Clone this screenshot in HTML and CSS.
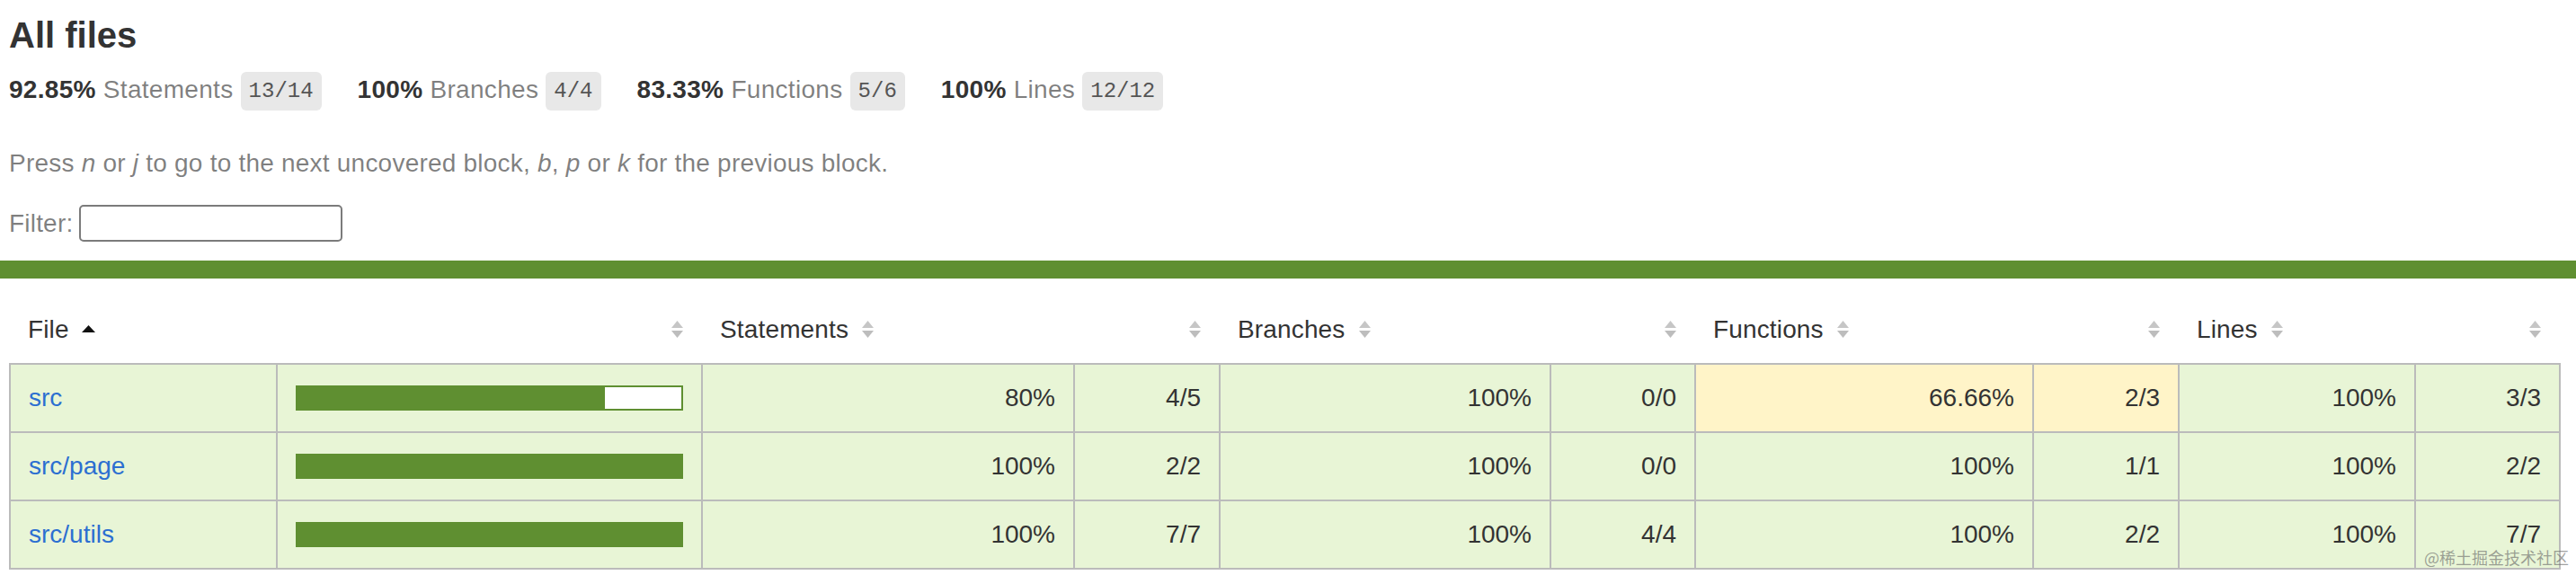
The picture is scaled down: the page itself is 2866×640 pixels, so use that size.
FILE: index.html
```html
<!doctype html>
<html lang="en">
<head>
<meta charset="utf-8">
<title>Code coverage report for All files</title>
<link rel="stylesheet" href="styles.css">
</head>
<body>
<div class="wrapper">
  <div class="header">
    <h1>All files</h1>
    <div class="summary">
      <div class="summary-item"><span class="strong">92.85% </span> <span class="quiet">Statements</span> <span class="fraction">13/14</span></div>
      <div class="summary-item"><span class="strong">100% </span> <span class="quiet">Branches</span> <span class="fraction">4/4</span></div>
      <div class="summary-item"><span class="strong">83.33% </span> <span class="quiet">Functions</span> <span class="fraction">5/6</span></div>
      <div class="summary-item"><span class="strong">100% </span> <span class="quiet">Lines</span> <span class="fraction">12/12</span></div>
    </div>
    <p class="quiet hint">Press <em>n</em> or <em>j</em> to go to the next uncovered block, <em>b</em>, <em>p</em> or <em>k</em> for the previous block.</p>
    <div class="quiet filter"><span>Filter:</span><input type="search" class="file-search"></div>
  </div>
  <div class="status-line"></div>
  <div class="table-wrap">
    <table class="coverage-summary">
      <colgroup>
        <col class="c-file"><col class="c-pic"><col class="c-spct"><col class="c-sabs"><col class="c-bpct"><col class="c-babs"><col class="c-fpct"><col class="c-fabs"><col class="c-lpct"><col class="c-labs">
      </colgroup>
      <thead>
        <tr>
          <th class="file sorted">File<span class="sorter"><svg viewBox="0 0 15 20" width="15" height="20"><polygon points="0,14 7.5,6 15,14" fill="#111"/></svg></span></th>
          <th class="pic"><span class="sorter"><svg viewBox="0 0 15 20" width="15" height="20"><polygon points="1,9 7.5,1 14,9" fill="#c6c6c6"/><polygon points="1,12 7.5,20 14,12" fill="#bdbdbd"/></svg></span></th>
          <th class="pct">Statements<span class="sorter"><svg viewBox="0 0 15 20" width="15" height="20"><polygon points="1,9 7.5,1 14,9" fill="#c6c6c6"/><polygon points="1,12 7.5,20 14,12" fill="#bdbdbd"/></svg></span></th>
          <th class="abs"><span class="sorter"><svg viewBox="0 0 15 20" width="15" height="20"><polygon points="1,9 7.5,1 14,9" fill="#c6c6c6"/><polygon points="1,12 7.5,20 14,12" fill="#bdbdbd"/></svg></span></th>
          <th class="pct">Branches<span class="sorter"><svg viewBox="0 0 15 20" width="15" height="20"><polygon points="1,9 7.5,1 14,9" fill="#c6c6c6"/><polygon points="1,12 7.5,20 14,12" fill="#bdbdbd"/></svg></span></th>
          <th class="abs"><span class="sorter"><svg viewBox="0 0 15 20" width="15" height="20"><polygon points="1,9 7.5,1 14,9" fill="#c6c6c6"/><polygon points="1,12 7.5,20 14,12" fill="#bdbdbd"/></svg></span></th>
          <th class="pct">Functions<span class="sorter"><svg viewBox="0 0 15 20" width="15" height="20"><polygon points="1,9 7.5,1 14,9" fill="#c6c6c6"/><polygon points="1,12 7.5,20 14,12" fill="#bdbdbd"/></svg></span></th>
          <th class="abs"><span class="sorter"><svg viewBox="0 0 15 20" width="15" height="20"><polygon points="1,9 7.5,1 14,9" fill="#c6c6c6"/><polygon points="1,12 7.5,20 14,12" fill="#bdbdbd"/></svg></span></th>
          <th class="pct">Lines<span class="sorter"><svg viewBox="0 0 15 20" width="15" height="20"><polygon points="1,9 7.5,1 14,9" fill="#c6c6c6"/><polygon points="1,12 7.5,20 14,12" fill="#bdbdbd"/></svg></span></th>
          <th class="abs"><span class="sorter"><svg viewBox="0 0 15 20" width="15" height="20"><polygon points="1,9 7.5,1 14,9" fill="#c6c6c6"/><polygon points="1,12 7.5,20 14,12" fill="#bdbdbd"/></svg></span></th>
        </tr>
      </thead>
      <tbody>
        <tr>
          <td class="file high"><a href="#">src</a></td>
          <td class="pic high"><div class="chart"><div class="cover-fill" style="width: 80%"></div><div class="cover-empty" style="width: 20%"></div></div></td>
          <td class="pct high">80%</td>
          <td class="abs high">4/5</td>
          <td class="pct high">100%</td>
          <td class="abs high">0/0</td>
          <td class="pct medium">66.66%</td>
          <td class="abs medium">2/3</td>
          <td class="pct high">100%</td>
          <td class="abs high">3/3</td>
        </tr>
        <tr>
          <td class="file high"><a href="#">src/page</a></td>
          <td class="pic high"><div class="chart"><div class="cover-fill" style="width: 100%"></div></div></td>
          <td class="pct high">100%</td>
          <td class="abs high">2/2</td>
          <td class="pct high">100%</td>
          <td class="abs high">0/0</td>
          <td class="pct high">100%</td>
          <td class="abs high">1/1</td>
          <td class="pct high">100%</td>
          <td class="abs high">2/2</td>
        </tr>
        <tr>
          <td class="file high"><a href="#">src/utils</a></td>
          <td class="pic high"><div class="chart"><div class="cover-fill" style="width: 100%"></div></div></td>
          <td class="pct high">100%</td>
          <td class="abs high">7/7</td>
          <td class="pct high">100%</td>
          <td class="abs high">4/4</td>
          <td class="pct high">100%</td>
          <td class="abs high">2/2</td>
          <td class="pct high">100%</td>
          <td class="abs high">7/7</td>
        </tr>
      </tbody>
    </table>
  </div>
</div>
<div class="watermark">@稀土掘金技术社区</div>
</body>
</html>
```

FILE: styles.css
```css
*, *::before, *::after { box-sizing: border-box; }

html, body { margin: 0; padding: 0; }

body {
  font-family: "Liberation Sans", Arial, Helvetica, sans-serif;
  font-size: 28px;
  line-height: 34px;
  color: #333;
  background: #fff;
  position: relative;
  min-height: 640px;
  overflow: hidden;
}

.header { padding: 16px 18px 20px 10px; }

h1 {
  font-size: 40px;
  line-height: 47px;
  margin: 0;
  font-weight: bold;
}

.summary { display: flex; }

.summary-item {
  padding: 20px 40px 20px 0;
  white-space: nowrap;
  letter-spacing: 0.3px;
}

.strong { font-weight: bold; }

.quiet { color: rgba(0, 0, 0, 0.5); }

.fraction {
  font-family: "Liberation Mono", "DejaVu Sans Mono", monospace;
  font-size: 24px;
  line-height: 24px;
  letter-spacing: 0;
  color: #555;
  background: #e8e8e8;
  padding: 8px 9px;
  border-radius: 6px;
  vertical-align: middle;
}

.hint {
  margin: 28px 0;
  letter-spacing: 0.22px;
}

.filter {
  display: flex;
  align-items: center;
  gap: 7px;
  letter-spacing: 0.2px;
}

.file-search {
  -webkit-appearance: none;
  appearance: none;
  width: 293px;
  height: 41px;
  margin: 1px 0;
  padding: 0 6px;
  border: 2px solid #7b7b7b;
  border-radius: 5px;
  background: #fff;
  font: inherit;
}

.status-line {
  height: 20px;
  background: #5f8f31;
}

.table-wrap { padding: 20px 18px 0 10px; }

.coverage-summary {
  border-collapse: collapse;
  table-layout: fixed;
  width: 2838px;
}

.c-file { width: 297px; }
.c-pic { width: 473px; }
.c-spct { width: 414px; }
.c-sabs { width: 162px; }
.c-bpct { width: 368px; }
.c-babs { width: 161px; }
.c-fpct { width: 376px; }
.c-fabs { width: 162px; }
.c-lpct { width: 263px; }
.c-labs { width: 161px; }

.coverage-summary tr { border-bottom: 2px solid #bbb; }
.coverage-summary tbody { border: 2px solid #bbb; }

.coverage-summary th,
.coverage-summary td {
  padding: 20px;
  vertical-align: top;
}

.coverage-summary th {
  text-align: left;
  font-weight: normal;
  white-space: nowrap;
  letter-spacing: 0.15px;
}

.coverage-summary td { border-right: 2px solid #bbb; }
.coverage-summary td:last-child { border-right: none; }

.coverage-summary th.pic,
.coverage-summary th.abs,
.coverage-summary td.pct,
.coverage-summary td.abs { text-align: right; }

.coverage-summary td.file { white-space: nowrap; }

.sorter {
  display: inline-block;
  width: 15px;
  height: 20px;
  margin-left: 14px;
  line-height: 0;
}

.sorter svg { display: block; }

a {
  color: #2c6fd1;
  text-decoration: none;
}

.high { background: #e8f5d6; }
.medium { background: #fff4c8; }

.chart {
  line-height: 0;
  margin-top: 3px;
  border: 2px solid #5f8f31;
}

.cover-fill,
.cover-empty {
  display: inline-block;
  height: 24px;
  vertical-align: top;
}

.cover-fill { background: #5f8f31; }
.cover-empty { background: #fff; }

.watermark {
  position: absolute;
  top: 608px;
  right: 8px;
  font-family: "Noto Sans CJK SC", sans-serif;
  font-size: 18px;
  line-height: 24px;
  color: rgba(100, 100, 100, 0.6);
  white-space: nowrap;
}
```
